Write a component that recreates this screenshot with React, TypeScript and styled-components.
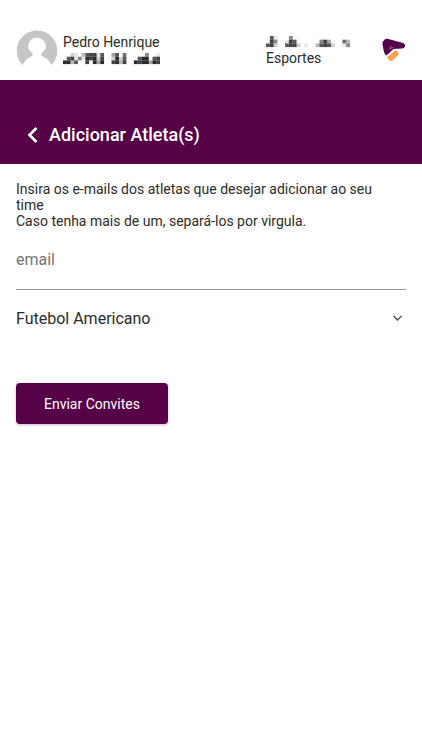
import React from "react";
import styled, { createGlobalStyle } from "styled-components";

const PURPLE = "#560048";

const GlobalStyle = createGlobalStyle`
  *, *::before, *::after { box-sizing: border-box; }
  body {
    margin: 0;
    background: #fff;
    color: #2b2b2b;
    font-family: Roboto, "Liberation Sans", sans-serif;
  }
`;

const Header = styled.header`
  display: flex;
  align-items: flex-start;
  height: 80px;
  padding: 30px 16px 0;
`;

const Person = styled.div`
  display: flex;
  flex: 1;
  gap: 5px;
`;

const Lines = styled.div`
  display: flex;
  flex-direction: column;
  padding-top: 4px;
  font-size: 14px;
  line-height: 16px;
`;

const Team = styled(Lines)`
  width: 116px;
`;

const Masked = styled.svg`
  display: block;
  height: 16px;
`;

const Logo = styled.svg`
  display: block;
  margin-top: 8px;
`;

const TitleBar = styled.div`
  display: flex;
  align-items: flex-end;
  gap: 9px;
  height: 84px;
  padding: 0 24px 17px;
  background: ${PURPLE};
  color: #fff;
`;

const BackButton = styled.button`
  display: flex;
  padding: 4px 0;
  border: 0;
  background: none;
  color: inherit;
`;

const Title = styled.h1`
  margin: 0;
  font-size: 18px;
  font-weight: 500;
  line-height: 24px;
`;

const Form = styled.form`
  display: flex;
  flex-direction: column;
  align-items: stretch;
  padding: 17px 16px;
`;

const Hint = styled.p`
  margin: 0;
  padding-right: 16px;
  font-size: 14px;
  line-height: 16px;
`;

const EmailInput = styled.input`
  width: 100%;
  height: 61px;
  padding: 0;
  border: 0;
  border-bottom: 1px solid #999;
  outline: 0;
  background: none;
  color: inherit;
  font: 16px Roboto, "Liberation Sans", sans-serif;
  &::placeholder { color: #757575; opacity: 1; }
`;

const SelectRow = styled.div`
  display: grid;
  align-items: center;
  margin-top: 8px;
  & > * { grid-area: 1 / 1; }
`;

const SportSelect = styled.select`
  width: 100%;
  height: 40px;
  padding: 0;
  border: 0;
  appearance: none;
  background: none;
  color: inherit;
  font: 16px Roboto, "Liberation Sans", sans-serif;
`;

const Chevron = styled.svg`
  justify-self: end;
  margin-right: 3px;
  pointer-events: none;
`;

const SubmitButton = styled.button`
  align-self: flex-start;
  height: 41px;
  margin-top: 45px;
  padding: 0 28px;
  border: 0;
  border-radius: 4px;
  background: ${PURPLE};
  box-shadow: 0 1px 3px rgba(86, 0, 72, 0.3);
  color: #fff;
  font: 14px Roboto, "Liberation Sans", sans-serif;
`;

const personMask = [
  "00210378817004706000005001",
  "07815198928002927000799078",
  "99370080949008938009899498",
];

const teamMask = [
  "0710005000000000000000",
  "0850018700000058400063",
  "7820078820100378720015",
];

type MosaicProps = { rows: string[]; width: number; top: number };

/* Each digit is the darkness of one cell, 0 to 9. */
function Mosaic({ rows, width, top }: MosaicProps) {
  const cell = width / rows[0].length;
  return (
    <Masked width={width} height="16" aria-hidden="true">
      {rows.flatMap((row, y) =>
        [...row].map((shade, x) => (
          <rect
            key={`${y}-${x}`}
            x={x * cell}
            y={top + y * 3.7}
            width={cell}
            height="3.7"
            fill="#111"
            opacity={Number(shade) / 10}
          />
        ))
      )}
    </Masked>
  );
}

export default function App() {
  return (
    <>
      <GlobalStyle />
      <Header>
        <Person>
          <svg width="42" height="40" viewBox="0 0 42 40" aria-hidden="true">
            <path
              d="M6.500 35A20.300 20.300 0 1 1 35.500 35C33.500 30.500 30 27.500 26 26Q24.500 25 26 22.500Q30 19.500 30 16.500A9 9 0 0 0 12 16.500Q12 19.500 16 22.500Q17.500 25 16 26C12 27.500 8.500 30.500 6.500 35Z"
              fill="#c5c5c5"
            />
          </svg>
          <Lines>
            <span>Pedro Henrique</span>
            <Mosaic rows={personMask} width={97} top={3} />
          </Lines>
        </Person>
        <Team>
          <Mosaic rows={teamMask} width={84} top={2} />
          <span>Esportes</span>
        </Team>
        <Logo width="24" height="26" viewBox="0 0 24 26" role="img" aria-label="Logo">
          <path
            d="M5.500 0.800L21 5Q23.500 6 23 8Q22.500 10.500 20 10.500L11.500 11L4.500 17.500Q2.500 16.500 2 14L0.500 6.500Q0 4.800 1 3.500L2.500 1.800Q3.800 0.400 5.500 0.800Z"
            fill={PURPLE}
          />
          <path d="M7.500 7.500L12 9.500L7.500 12.500Z" fill="#fff" opacity="0.25" />
          <path
            d="M12.500 12.500Q14 11.500 15.300 12.700L16.800 14.700Q17.700 16 16.500 17.200L10.500 23Q9 24.200 7.700 23L5.400 20.800Q4.400 19.500 5.700 18.300Z"
            fill="#ffa24b"
            stroke="#fff"
            strokeWidth="1"
          />
        </Logo>
      </Header>
      <TitleBar>
        <BackButton type="button" aria-label="Voltar">
          <svg width="16" height="16" viewBox="0 0 16 16" fill="none" aria-hidden="true">
            <path d="M12.500 1L5.500 8L12.500 15" stroke="currentColor" strokeWidth="2.600" />
          </svg>
        </BackButton>
        <Title>Adicionar Atleta(s)</Title>
      </TitleBar>
      <Form onSubmit={(event) => event.preventDefault()}>
        <Hint>Insira os e-mails dos atletas que desejar adicionar ao seu time</Hint>
        <Hint>Caso tenha mais de um, separá-los por virgula.</Hint>
        <EmailInput type="text" placeholder="email" aria-label="email" />
        <SelectRow>
          <SportSelect aria-label="Esporte" defaultValue="futebol-americano">
            <option value="futebol-americano">Futebol Americano</option>
          </SportSelect>
          <Chevron width="12" height="12" viewBox="0 0 12 12" fill="none" aria-hidden="true">
            <path d="M2.500 4L6.500 8L10.500 4" stroke="#555" strokeWidth="1.500" />
          </Chevron>
        </SelectRow>
        <SubmitButton type="submit">Enviar Convites</SubmitButton>
      </Form>
    </>
  );
}
